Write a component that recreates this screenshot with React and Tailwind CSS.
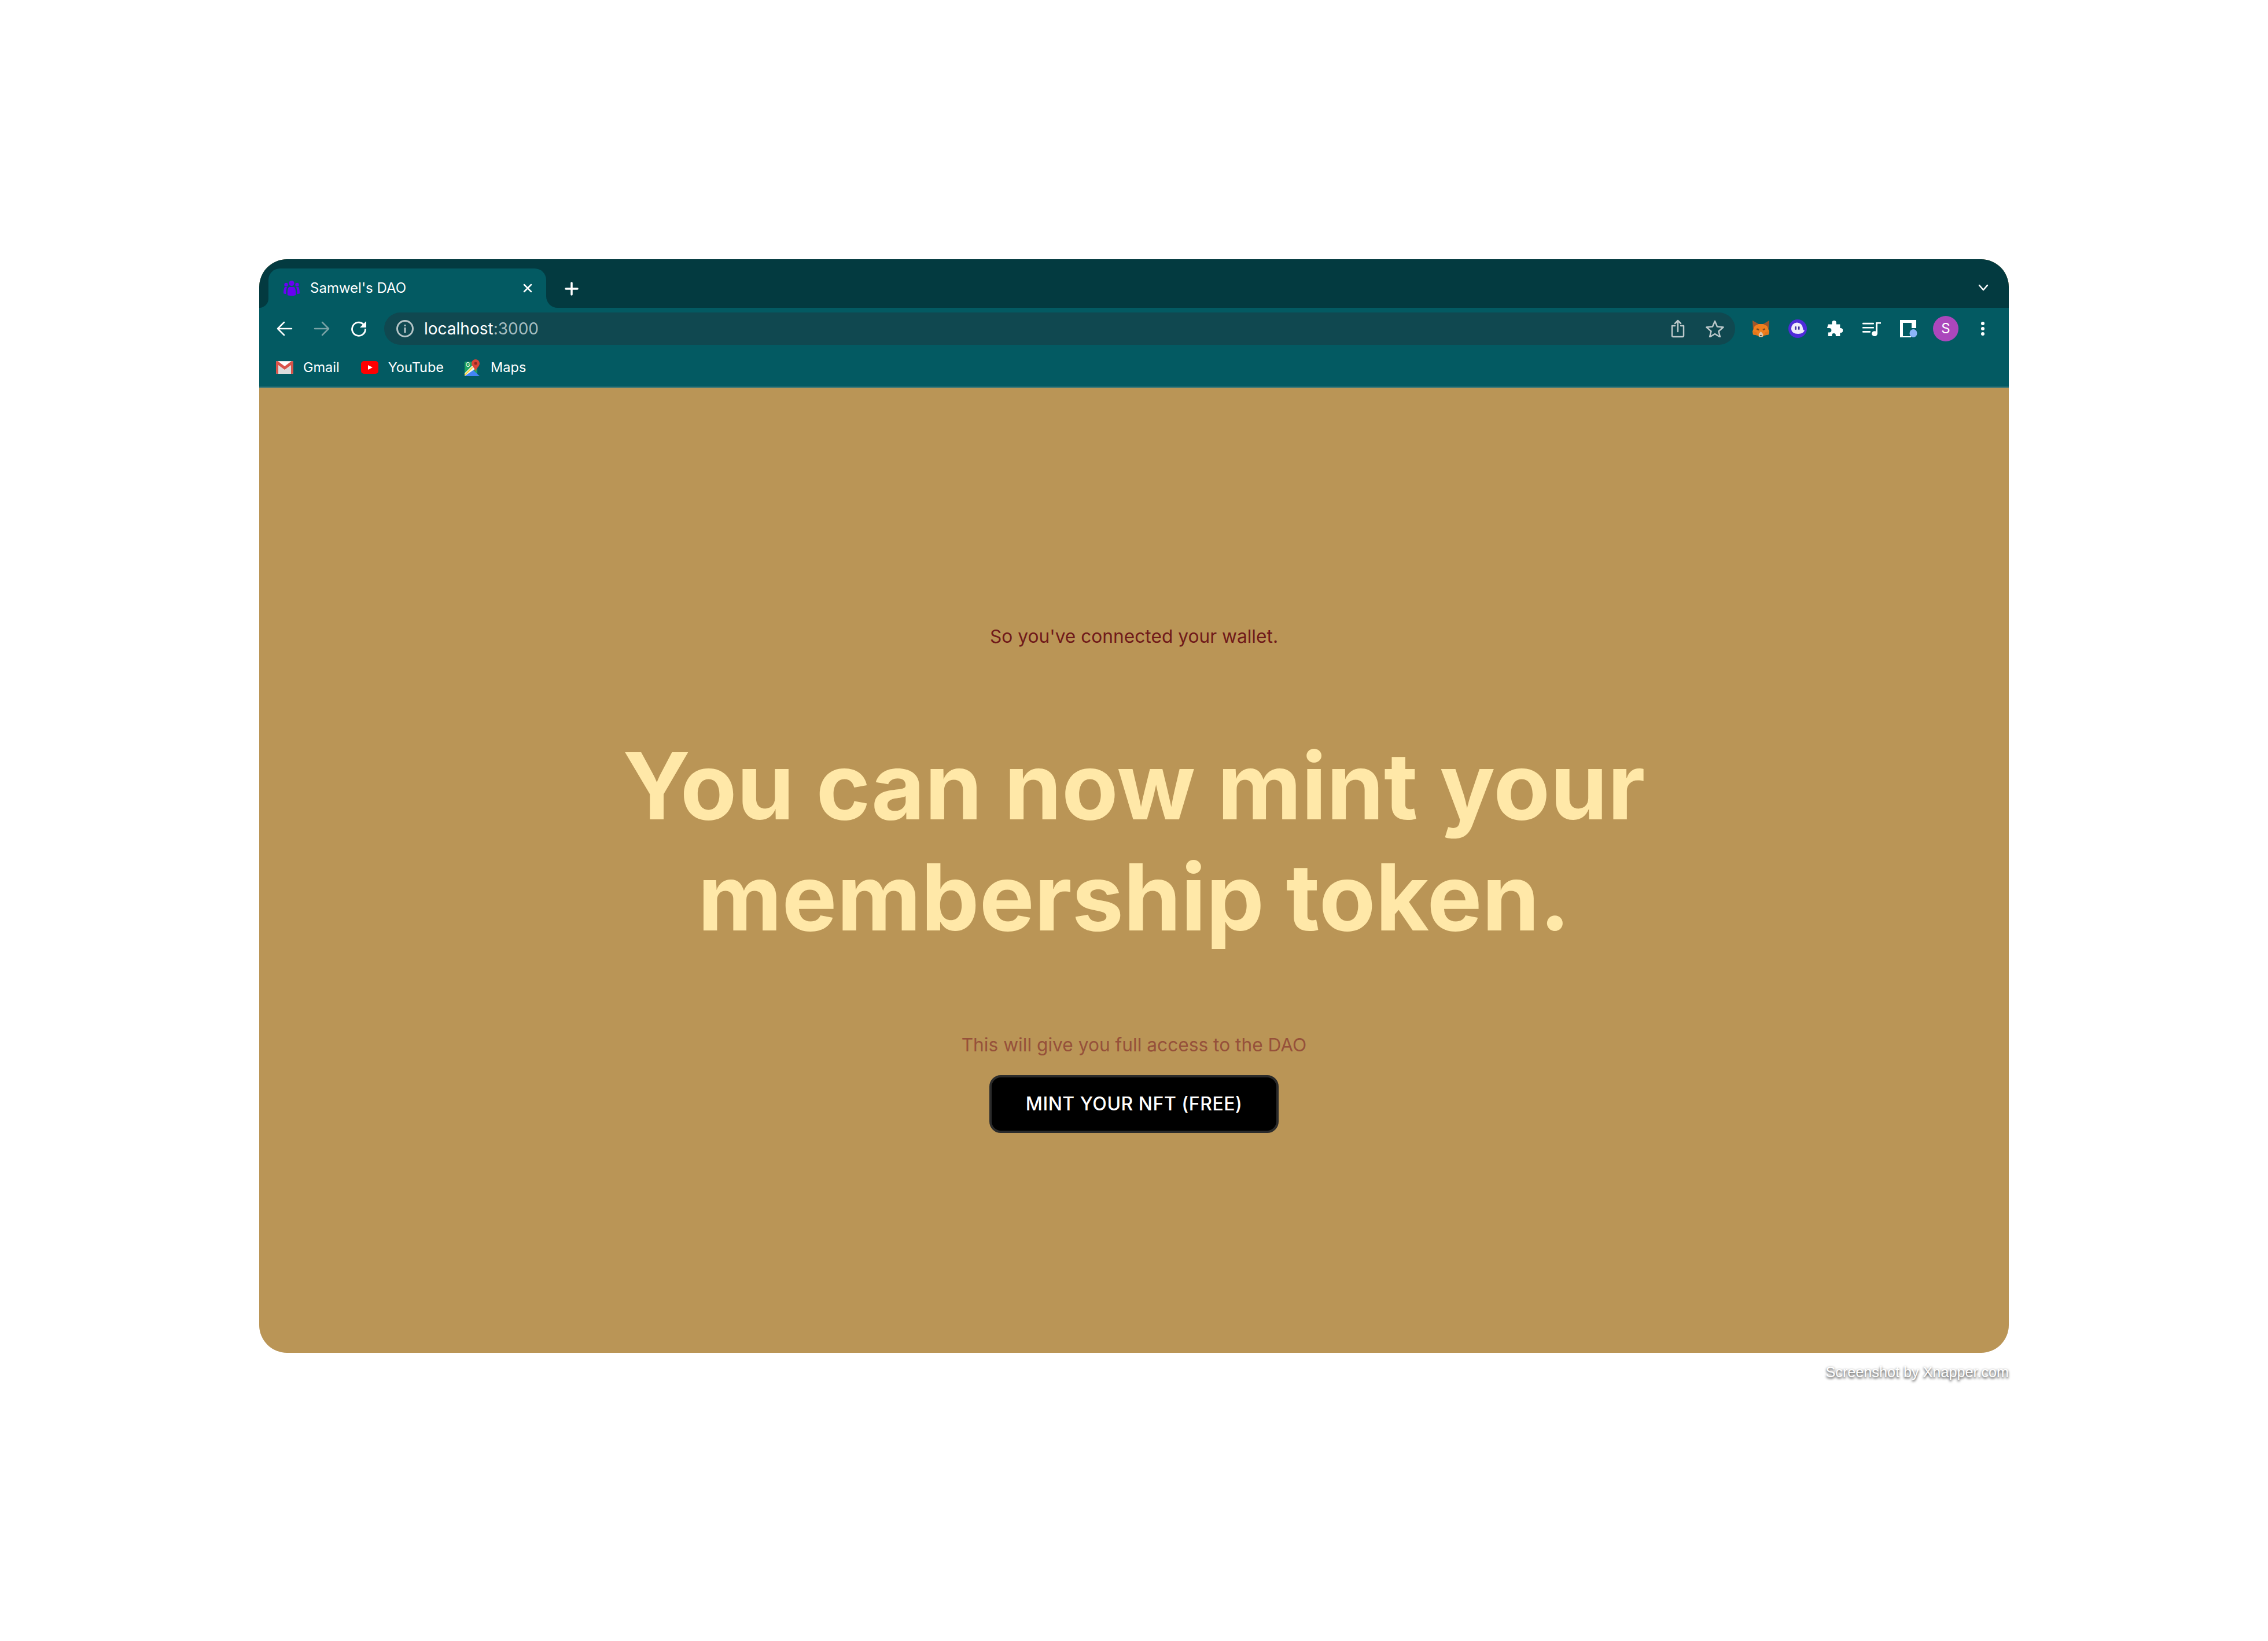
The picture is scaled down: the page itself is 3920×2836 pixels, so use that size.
const inter = "font-['Inter','Noto_Sans',sans-serif]";

function IconButton({ children }) {
  return <div className="w-16 h-14 flex items-center justify-center shrink-0">{children}</div>;
}

function Favicon() {
  return (
    <svg width="28" height="26" viewBox="0 0 28 26" fill="#6a00f4">
      <circle cx="14" cy="4.500" r="4.500" />
      <circle cx="4.500" cy="7" r="3.200" />
      <circle cx="23.500" cy="7" r="3.200" />
      <path d="M7 25c-.6-5 .2-14 3.400-14h7.200c3.200 0 4 9 3.400 14-2 1.300-12 1.300-14 0z" />
      <path d="M0 22c0-5 1-10 2.500-11h3.500c-1 3-1.600 8-1.500 12-2 0-3.500-.3-4.500-1z" />
      <path d="M28 22c0-5-1-10-2.500-11h-3.500c1 3 1.600 8 1.500 12 2 0 3.500-.3 4.500-1z" />
    </svg>
  );
}

function Fox() {
  return (
    <svg width="31" height="30" viewBox="0 0 32 38" preserveAspectRatio="none">
      <path d="M1 1l11 8h8L31 1l-1 18H2z" fill="#a0562a" />
      <path d="M5 13l7-4h8l7 4 4 12-1 7-8 2-3 3h-6l-3-3-8-2-1-7z" fill="#f07f1e" />
      <path d="M9 18l4 2-1 3-4-2zM23 18l-4 2 1 3 4-2z" fill="#7a4a22" />
      <path d="M12 31l4-6 4 6-1 6h-6z" fill="#d9c6ad" />
      <path d="M14 33h4l-2 2z" fill="#1c1c1c" />
      <path d="M2 24l6 3 3 7-8-2zM30 24l-6 3-3 7 8-2z" fill="#e2761b" />
    </svg>
  );
}

function Ghost() {
  return (
    <svg width="32" height="32" viewBox="0 0 32 32">
      <circle cx="16" cy="16" r="16" fill="#4f2bd9" />
      <path d="M5 16a10 10 0 0 1 20-1c0 2 1 4 3 4-1 3-5 6-11 6-7 0-12-3-12-9z" fill="#efecf9" />
      <rect x="11.500" y="12" width="2.500" height="6" rx="1.250" fill="#3d2a9c" />
      <rect x="17" y="12" width="2.500" height="6" rx="1.250" fill="#3d2a9c" />
    </svg>
  );
}

function Puzzle() {
  return (
    <svg width="28" height="28" viewBox="0 0 30 30" fill="#fff">
      <path d="M3 8h7V5a4 4 0 0 1 8 0v3h7v7h1a4.300 4.300 0 0 1 0 8.600h-1V30h-8v-2a3.500 3.500 0 0 0-7 0v2H3v-7h2a4 4 0 0 0 0-8H1z" transform="translate(0 -1)" />
    </svg>
  );
}

function MediaQueue() {
  return (
    <svg width="32" height="25" viewBox="0 0 32 28" preserveAspectRatio="none" fill="#fff">
      <rect x="0" y="2" width="20" height="3" rx="1" />
      <rect x="0" y="10" width="20" height="3" rx="1" />
      <rect x="0" y="18" width="14" height="3" rx="1" />
      <path d="M23 1h9v3h-6v19a5 5 0 1 1-3-4.500z" />
    </svg>
  );
}

function SidePanel() {
  return (
    <svg width="30" height="30" viewBox="0 0 30 30">
      <path d="M0 0h28v14h-8V5H5v23h14v2H0z" fill="#fff" />
      <ellipse cx="23" cy="23" rx="6.500" ry="7" fill="#8ab4f8" />
    </svg>
  );
}

function Gmail() {
  return (
    <svg width="30" height="22" viewBox="0 0 30 22">
      <rect x="0" y="0" width="30" height="22" rx="2" fill="#e8e8e8" />
      <path d="M0 2l15 11L30 2" fill="#fff" />
      <path d="M4 22V8l11 8 11-8v14" fill="#dcdcdc" />
      <path d="M0 2a2 2 0 0 1 2-2h1l12 9L27 0h1a2 2 0 0 1 2 2v18a2 2 0 0 1-2 2h-2V7L15 15 4 7v15H2a2 2 0 0 1-2-2z" fill="#d9534a" />
    </svg>
  );
}

function YouTube() {
  return (
    <svg width="30" height="22" viewBox="0 0 30 22">
      <rect width="30" height="22" rx="5" fill="#f00" />
      <path d="M12 7l8 4-8 4z" fill="#fff" />
    </svg>
  );
}

function Maps() {
  return (
    <svg width="26" height="29" viewBox="0 0 26 29">
      <path d="M0 4h22v24H0z" fill="#1ea362" />
      <path d="M0 29l13-12 13 12z" fill="#4285f4" />
      <path d="M0 24L16 8l6 6L0 29z" fill="#f1f3f4" />
      <path d="M0 26L13 13l1.500 1.500L0 29z" fill="#fbd52c" />
      <path d="M19 0a7 7 0 0 1 7 7c0 5-5 7-7 14-2-7-7-9-7-14a7 7 0 0 1 7-7z" fill="#db4437" />
      <circle cx="19" cy="7" r="2.500" fill="#8e2a22" />
      <text x="2" y="13" fontSize="10" fill="#fff" fontFamily="Inter">G</text>
    </svg>
  );
}

function Bookmark({ icon, label, className }) {
  return (
    <div className={`flex items-center ${className}`}>
      {icon}
      <span className="text-[23.5px] text-white">{label}</span>
    </div>
  );
}

export default function App() {
  return (
    <div className={`min-h-screen bg-white flex flex-col items-center pt-[448px] ${inter}`}>
      <div className="w-[3024px] h-[1890px] rounded-[48px] overflow-hidden bg-[#ba9556] flex flex-col">
        <div className="h-[84px] bg-[#033a40] flex items-end relative shrink-0">
          <div className="relative ml-4 w-[480px] h-[68px] bg-[#035a62] rounded-t-[20px] flex items-center">
            <div className="absolute left-[-16px] bottom-0 w-4 h-4 bg-[#035a62]">
              <div className="w-full h-full bg-[#033a40] rounded-br-[16px]" />
            </div>
            <div className="absolute right-[-20px] bottom-0 w-5 h-5 bg-[#035a62]">
              <div className="w-full h-full bg-[#033a40] rounded-bl-[20px]" />
            </div>
            <div className="ml-[26px] mr-[18px] flex"><Favicon /></div>
            <span className="flex-1 text-[24px] text-white">Samwel's DAO</span>
            <svg className="mr-[24px]" width="16" height="16" viewBox="0 0 16 16" stroke="#fff" strokeWidth="2.500" strokeLinecap="round">
              <path d="M2 2l12 12M14 2L2 14" />
            </svg>
          </div>
          <svg className="ml-[32px] mb-[21px]" width="24" height="24" viewBox="0 0 24 24" stroke="#fff" strokeWidth="3.500" strokeLinecap="round">
            <path d="M12 2v20M2 12h20" />
          </svg>
          <svg className="ml-auto mr-[35px] mb-[29px]" width="18" height="12" viewBox="0 0 18 12" fill="none" stroke="#fff" strokeWidth="2.500" strokeLinecap="round" strokeLinejoin="round">
            <path d="M2 2l7 8 7-8" />
          </svg>
        </div>

        <div className="h-[72px] bg-[#035a62] flex items-center pl-3 shrink-0">
          <IconButton>
            <svg width="28" height="26" viewBox="0 0 28 26" fill="none" stroke="#fff" strokeWidth="2.500" strokeLinecap="round" strokeLinejoin="round">
              <path d="M26 13H2M13 2L2 13l11 11" />
            </svg>
          </IconButton>
          <IconButton>
            <svg width="28" height="26" viewBox="0 0 28 26" fill="none" stroke="#7ba3a6" strokeWidth="2.500" strokeLinecap="round" strokeLinejoin="round">
              <path d="M2 13h24M15 2l11 11-11 11" />
            </svg>
          </IconButton>
          <IconButton>
            <svg width="28" height="28" viewBox="0 0 28 28" fill="none">
              <path d="M24 9a11.500 11.500 0 1 0 1.500 5" stroke="#fff" strokeWidth="2.800" />
              <path d="M27 1v11H16z" fill="#fff" />
            </svg>
          </IconButton>
          <div className="ml-3 w-[2335px] h-14 bg-[#104850] rounded-full flex items-center">
            <svg className="ml-5" width="32" height="32" viewBox="0 0 32 32" fill="none">
              <circle cx="16" cy="16" r="13.500" stroke="#b5c4c6" strokeWidth="3" />
              <rect x="14.500" y="14" width="3" height="9" fill="#b5c4c6" />
              <rect x="14.500" y="9" width="3" height="3" fill="#b5c4c6" />
            </svg>
            <span className="ml-[17px] text-[28px] text-white">localhost<span className="text-[#a5bdc0]">:3000</span></span>
            <div className="ml-auto flex pr-[3px]">
              <IconButton>
                <svg width="24" height="32" viewBox="0 0 24 32" fill="none" stroke="#bcc8ca" strokeWidth="2.500" strokeLinecap="round" strokeLinejoin="round">
                  <path d="M7 11H2v17a2 2 0 0 0 2 2h16a2 2 0 0 0 2-2V11h-5M12 21V2M7 7l5-5 5 5" />
                </svg>
              </IconButton>
              <IconButton>
                <svg width="32" height="30" viewBox="0 0 32 30" fill="none" stroke="#bcc8ca" strokeWidth="2.500" strokeLinejoin="round">
                  <path d="M16 2l4 9.500 10.500 1-8 7 2.500 10L16 24l-9 5.500 2.500-10-8-7 10.500-1z" />
                </svg>
              </IconButton>
            </div>
          </div>
          <div className="ml-3 flex">
            <IconButton><Fox /></IconButton>
            <IconButton><Ghost /></IconButton>
            <IconButton><Puzzle /></IconButton>
            <IconButton><MediaQueue /></IconButton>
            <IconButton><SidePanel /></IconButton>
            <IconButton>
              <div className="w-11 h-11 rounded-full bg-[#ab47bc] flex items-center justify-center text-white text-[24px]">S</div>
            </IconButton>
            <IconButton>
              <div className="flex flex-col gap-[3px]">
                <div className="w-[6px] h-[6px] rounded-full bg-white" />
                <div className="w-[6px] h-[6px] rounded-full bg-white" />
                <div className="w-[6px] h-[6px] rounded-full bg-white" />
              </div>
            </IconButton>
          </div>
        </div>

        <div className="h-[66px] bg-[#035a62] border-b-2 border-[#2f7379] flex items-center pl-[29px] pb-[2px] shrink-0">
          <Bookmark icon={<Gmail />} label="Gmail" className="gap-[17px]" />
          <Bookmark icon={<YouTube />} label="YouTube" className="gap-[17px] ml-[37px]" />
          <Bookmark icon={<Maps />} label="Maps" className="gap-[19px] ml-[36px]" />
        </div>

        <div className="flex-1 flex flex-col items-center">
          <p className="mt-[408px] text-[31.7px] leading-[44px] text-[#701a1a]">So you've connected your wallet.</p>
          <h1 className="mt-[140px] text-center text-[159.5px] leading-[192px] font-bold text-[#ffe8a8]">
            You can now mint your
            <br />
            membership token.
          </h1>
          <p className="mt-[138px] text-[31.7px] leading-[44px] text-[#96513a]">This will give you full access to the DAO</p>
          <button className="mt-[30px] w-[500px] h-[100px] bg-black border-4 border-[#2b2b2b] rounded-[20px] text-white text-[32px] font-medium tracking-[0.5px]">
            MINT YOUR NFT (FREE)
          </button>
        </div>
      </div>
      <div className="w-[3024px] flex justify-end mt-[15px]">
        <span className="font-['Liberation_Sans',sans-serif] text-[25.2px] leading-[36px] text-white [text-shadow:0_2px_4px_rgba(0,0,0,0.9)]">Screenshot by Xnapper.com</span>
      </div>
    </div>
  );
}
